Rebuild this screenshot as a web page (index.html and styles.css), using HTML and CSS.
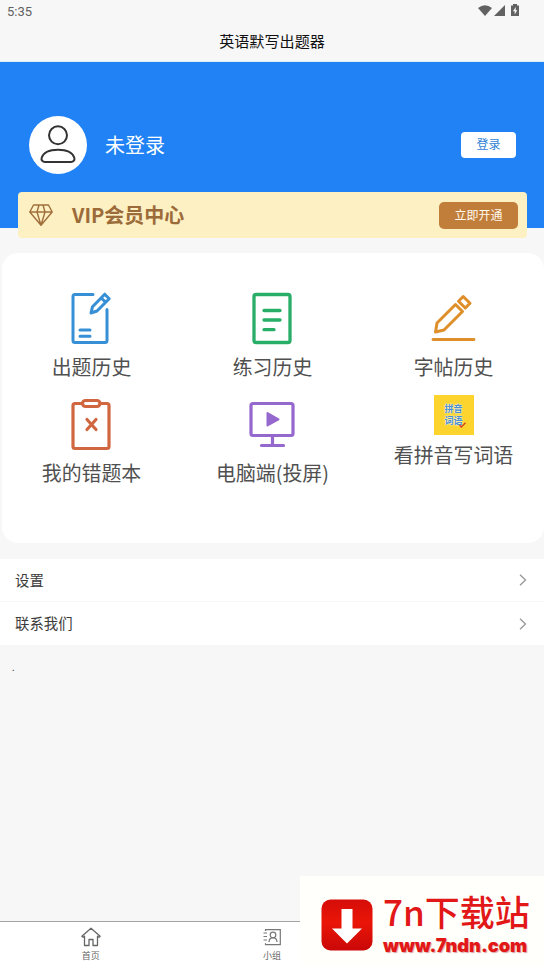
FILE: index.html
```html
<!DOCTYPE html>
<html lang="zh-CN">
<head>
<meta charset="utf-8">
<title>英语默写出题器</title>
<link rel="stylesheet" href="styles.css">
</head>
<body>
<div class="app">
  <header class="topbar">
    <div class="status">
      <span>5:35</span>
      <svg class="status-icons" width="42" height="14" viewBox="0 0 42 14" fill="#626262">
        <path d="M0 4Q7-1.500 14 4L7 12Z"/><path d="M27 1V12H16Z"/>
        <path d="M35 1.500V0h4v1.500h2V12h-8V1.500z"/><path d="M37.700 3 35 7.300h1.700V10.500l2.600-4.200h-1.600z" fill="#f7f7f7"/>
      </svg>
    </div>
    <h1>英语默写出题器</h1>
  </header>

  <section class="hero">
    <div class="profile">
      <div class="avatar">
        <svg width="58" height="58" viewBox="0 0 58 58" fill="none" stroke="#333" stroke-width="2">
          <circle cx="29" cy="19.300" r="9"/>
          <path d="M16 46h26c2.500 0 4-2 3.300-4.300C43.500 36 37 33.700 29 33.700S14.500 36 12.700 41.700C12 44 13.500 46 16 46Z"/>
        </svg>
      </div>
      <span class="name">未登录</span>
      <button class="login">登录</button>
    </div>
    <div class="vip">
      <svg width="24" height="22" viewBox="0 0 24 22" fill="none" stroke="#a06f3c" stroke-width="1.400" stroke-linejoin="round">
        <path d="M4.500 1h15L23.200 8 12 21.200.8 8zM.8 8h22.400M8 8l4 13.200L16 8M8 8l2-7M16 8l-2-7"/>
      </svg>
      <strong>VIP会员中心</strong>
      <button class="open">立即开通</button>
    </div>
  </section>

  <main class="card">
    <div class="item">
      <svg width="60" height="60" viewBox="0 0 60 60" fill="none" stroke="#378fd5" stroke-width="3" stroke-linecap="round" stroke-linejoin="round">
        <path d="M32 5.500H14q-2 0-2 2v44q0 2 2 2h30q2 0 2-2V20.500M19 41h10M19 47.300h10"/>
        <path d="m30 24 1.500-6.300L43.700 5.200l4.500 4.500L36 22zM40.300 9l4.300 4.300"/>
      </svg>
      <span>出题历史</span>
    </div>
    <div class="item">
      <svg width="60" height="60" viewBox="0 0 60 60" fill="none" stroke="#29ae68" stroke-width="3.300" stroke-linecap="round">
        <rect x="12" y="5.500" width="36" height="48" rx="2"/><path d="M22 21.500h16M22 31h16M22 40.700h10"/>
      </svg>
      <span>练习历史</span>
    </div>
    <div class="item">
      <svg width="60" height="60" viewBox="0 0 60 60" fill="none" stroke="#df8f29" stroke-width="3" stroke-linejoin="round">
        <path d="M10 50.500h41" stroke-linecap="round" stroke-width="2.800"/><path d="m12.500 43 1.500-9L32.500 15.500l7 7L21 41zM35.500 12.200l4.700-4.700 6.800 6.800-4.700 4.700z"/>
      </svg>
      <span>字帖历史</span>
    </div>
    <div class="item">
      <svg width="60" height="60" viewBox="0 0 60 60" fill="none" stroke="#d16740" stroke-width="3.200" stroke-linecap="round">
        <path d="M21 8.500h-7q-2 0-2 2v41q0 2 2 2h32q2 0 2-2v-41q0-2-2-2h-7"/><rect x="21.500" y="5.500" width="17.500" height="6" rx="3"/><path d="m26 24.500 9 10m0-10-9 10"/>
      </svg>
      <span>我的错题本</span>
    </div>
    <div class="item">
      <svg width="60" height="60" viewBox="0 0 60 60" fill="none" stroke="#9568ce" stroke-width="3.200" stroke-linecap="round">
        <rect x="9" y="8.500" width="42" height="32" rx="2"/><path d="M30.500 41v9M19.500 50.500h22"/><path d="m25.500 18 11 6.300-11 6.200z" fill="#9568ce" stroke-width="2" stroke-linejoin="round"/>
      </svg>
      <span>电脑端(投屏)</span>
    </div>
    <div class="item">
      <div class="pinyin"><b>拼音</b><b>词语</b>
        <svg class="tick" width="7" height="6" viewBox="0 0 7 6" fill="none" stroke="#d43b24" stroke-width="1.300"><path d="m.5 3 1.800 2L6.500.7"/></svg>
      </div>
      <span>看拼音写词语</span>
    </div>
  </main>

  <nav class="list">
    <div class="row"><span>设置</span><svg width="8" height="12" viewBox="0 0 8 12" fill="none" stroke="#989898" stroke-width="1.300"><path d="m1 .8 5.500 5.200L1 11.200"/></svg></div>
    <div class="row"><span>联系我们</span><svg width="8" height="12" viewBox="0 0 8 12" fill="none" stroke="#989898" stroke-width="1.300"><path d="m1 .8 5.500 5.200L1 11.200"/></svg></div>
  </nav>
  <p class="note">.</p>

  <footer class="tabs">
    <div class="tab">
      <svg width="20" height="20" viewBox="0 0 20 20" fill="none" stroke="#666" stroke-width="1.300" stroke-linejoin="round"><path d="M10 1.200.9 9.200l1 1 1.600-1V18.500H8v-6h4v6h4.500V9.200l1.600 1 1-1z"/></svg>
      <span>首页</span>
    </div>
    <div class="tab">
      <svg width="20" height="20" viewBox="0 0 20 20" fill="none" stroke="#777" stroke-width="1.200"><path d="M3.500 4V2.600h14.800v15.100H3.500v-1.500M1.500 6h3.500M1.500 9.500h3.500M1.500 13h3.500"/><circle cx="11" cy="8" r="2.800"/><path d="M7 15q.3-4.300 4-4.300t4 4.300"/></svg>
      <span>小组</span>
    </div>
    <div class="tab"></div>
  </footer>

  <aside class="brand">
    <svg width="52" height="52" viewBox="0 0 52 52">
      <defs><linearGradient id="red" x2="0" y2="1"><stop stop-color="#d50d09"/><stop offset=".45" stop-color="#ea1507"/><stop offset="1" stop-color="#c90808"/></linearGradient></defs>
      <rect x=".5" y=".5" width="51" height="51" rx="9" fill="url(#red)"/><path d="M20.500 10h11v19.500H41L26 44.500 11 29.500h9.500z" fill="#fff"/>
    </svg>
    <div class="brand-text"><span class="brand-name">7n下载站</span><span class="brand-url">www.7ndn.com</span></div>
  </aside>
</div>
</body>
</html>
```

FILE: styles.css
```css
* { box-sizing: border-box; }
body {
  margin: 0;
  background: #f7f7f7;
  color: #3b3b3b;
  font-family: "Noto Sans CJK SC", sans-serif;
}
button { border: 0; padding: 0; font-family: inherit; }
svg { display: block; flex: none; }

.app { position: relative; display: flex; flex-direction: column; height: 967px; overflow: hidden; }

.topbar { height: 62px; border-bottom: 1px solid #d9f0fb; }
.status {
  display: flex;
  justify-content: space-between;
  height: 22px;
  padding: 4px 24px 0 7px;
  font: 13px/15px Roboto, sans-serif;
  color: #626262;
}
.topbar h1 { margin: 0; font-size: 15.100px; font-weight: 400; line-height: 37px; text-align: center; color: #111; }

.hero { height: 166px; padding: 54px 17px 0 18px; background: #2082f4; }
.profile { display: flex; align-items: center; height: 58px; padding: 0 11px; }
.avatar { width: 58px; height: 58px; border-radius: 50%; background: #fff; }
.name { margin-left: 18px; padding-bottom: 1px; font-size: 20px; color: #fff; }
.login {
  width: 55px;
  height: 26px;
  margin-left: auto;
  padding-bottom: 2px;
  border-radius: 4px;
  background: #fff;
  color: #2f83d4;
  font-size: 12px;
  line-height: 24px;
}
.vip {
  display: flex;
  align-items: center;
  height: 46px;
  margin-top: 18px;
  padding: 0 9px 0 11px;
  border-radius: 4px;
  background: #fdf0c2;
  color: #9c6b3a;
}
.vip strong { margin-left: 19px; padding-bottom: 1px; font-size: 20px; }
.open {
  width: 79px;
  height: 27px;
  margin-left: auto;
  padding-bottom: 2px;
  border-radius: 5px;
  background: #c17e3b;
  color: #fff8eb;
  font-size: 12px;
}

.card {
  display: grid;
  grid-template-columns: repeat(3, 181px);
  grid-auto-rows: 106px;
  height: 290px;
  margin: 25px 0 0 2px;
  padding-top: 36px;
  border-radius: 16px;
  background: #fff;
}
.item {
  display: flex;
  flex-direction: column;
  align-items: center;
  margin: 0 1px 0 -1px;
  font-size: 19.900px;
  line-height: 36px;
  color: #505050;
  white-space: nowrap;
}
.item > svg { margin-right: 2px; }
.pinyin {
  position: relative;
  width: 40px;
  height: 40px;
  margin-bottom: 2px;
  padding-top: 7px;
  background: #fdd42d;
  color: #4a8fd0;
  font-size: 9px;
  line-height: 13px;
  text-align: center;
}
.pinyin b { display: block; height: 12px; font-weight: 700; text-shadow: 0 0 1px #fff, 0 0 2px #fff; }
.tick { position: absolute; left: 25px; top: 27px; }

.list { margin-top: 16px; }
.row {
  display: flex;
  align-items: center;
  justify-content: space-between;
  height: 42px;
  padding: 0 17px 0 15px;
  background: #fff;
  font-size: 14.400px;
}
.row span { padding-bottom: 2px; }
.row + .row { height: 43px; margin-top: 1px; }
.note { margin: 14px 0 0 12px; font-size: 9px; line-height: 18px; }

.tabs { display: grid; grid-template-columns: repeat(3, 1fr); height: 46px; margin-top: auto; border-top: 1px solid #a4a4a4; background: #fff; }
.tab { display: flex; flex-direction: column; align-items: center; padding-top: 5px; font-size: 9px; line-height: 18px; color: #666; }

.brand {
  position: absolute;
  right: 0;
  bottom: 0;
  display: flex;
  width: 244px;
  height: 91px;
  padding: 23px 0 0 21px;
  background: #fffffb;
}
.brand-text { display: flex; flex-direction: column; margin: -13px 0 0 10px; color: #e21718; white-space: nowrap; }
.brand-name { font-size: 35px; line-height: 49px; font-weight: 500; }
.brand-url { font: 900 18.200px/20px Inter, sans-serif; text-shadow: 1px 1px 1px #dba6a6; }
```
